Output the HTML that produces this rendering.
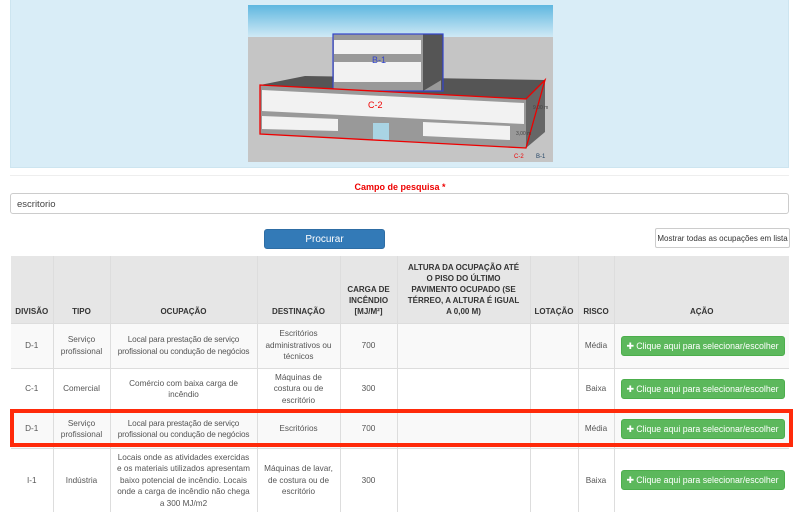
<!DOCTYPE html>
<html><head><meta charset="utf-8">
<style>
*{box-sizing:border-box;margin:0;padding:0}
body{width:800px;height:513px;overflow:hidden;background:#fff;font-family:"Liberation Sans",Arial,sans-serif;color:#333;position:relative}
.panel{position:absolute;left:10px;top:0;width:779px;height:168px;background:#d9edf7;border:1px solid #cde5f0;border-top:none}
.sep{position:absolute;left:10px;top:175px;width:779px;border-top:1px solid #eee}
.lbl{position:absolute;top:182px;left:0;width:800px;text-align:center;color:#e00;font-weight:bold;font-size:9px}
.inp{position:absolute;left:10px;top:193px;width:779px;height:21px;border:1px solid #ccc;border-radius:3px;font-size:9.5px;padding:5px 6px;color:#444}
.proc{position:absolute;left:264px;top:229px;width:121px;height:20px;background:#337ab7;border:1px solid #2e6da4;border-radius:3px;color:#fff;font-size:10px;display:flex;align-items:center;justify-content:center}
.most{position:absolute;left:655px;top:228px;width:135px;height:20px;background:#fff;border:1px solid #ccc;border-radius:2px;font-size:8px;display:flex;align-items:center;justify-content:center;color:#333}
table{position:absolute;left:11px;top:256px;width:778px;border-collapse:collapse;font-size:8.2px;color:#555;table-layout:fixed}
th{background:#e6e6e6;font-weight:bold;color:#333;font-size:8px;vertical-align:bottom;padding:3px 6px 6px;border-left:1px solid #ddd;line-height:11px;text-align:center}
td{border-left:1px solid #ddd;border-top:1px solid #ddd;text-align:center;vertical-align:middle;line-height:11.5px;padding:2px 6px;background:#f9f9f9}
td.o{padding:2px 1px;letter-spacing:-0.15px}
tr.w td{background:#fff}
.g{display:inline-block;background:#5cb85c;border:1px solid #4cae4c;border-radius:3px;color:#fff;font-size:8.8px;width:164px;height:20px;line-height:18px;text-align:center;white-space:nowrap}
.box{position:absolute;left:10px;top:409px;width:783px;height:38px;border:4px solid #ff2a0a}
</style></head><body>
<div class="panel"></div>
<svg style="position:absolute;left:248px;top:5px" width="305" height="157" viewBox="0 0 305 157">
<defs><linearGradient id="sky" x1="0" y1="0" x2="0" y2="1"><stop offset="0" stop-color="#5fb7e0"/><stop offset="1" stop-color="#cfe9f5"/></linearGradient></defs>
<rect width="305" height="157" fill="#c5c5c5"/>
<rect width="305" height="32" fill="url(#sky)"/>
<polygon points="12,80 57,71 297,75 278,94" fill="#555"/>
<rect x="85" y="29" width="108" height="57" fill="#999"/>
<rect x="86" y="35" width="87" height="14" fill="#f2f2f2"/>
<rect x="86" y="57" width="87" height="20" fill="#f2f2f2"/>
<polygon points="175,29 195,29 195,74 175,86" fill="#555"/>
<rect x="85" y="29" width="110" height="57" fill="none" stroke="#3344cc" stroke-width="1.2"/>
<text x="124" y="58" fill="#3344cc" font-size="9" font-family="Liberation Sans">B-1</text>
<polygon points="12,80 278,94 278,143 12,129" fill="#999"/>
<polygon points="14,85 276,98 276,119 14,106" fill="#f2f2f2"/>
<polygon points="14,111 90,114 90,126 14,124" fill="#f2f2f2"/>
<polygon points="175,117 262,121 262,135 175,131" fill="#f2f2f2"/>
<rect x="125" y="118" width="16" height="17" fill="#a9d4e4"/>
<polygon points="278,94 297,75 297,127 278,143" fill="#666"/>
<polygon points="12,80 278,94 297,75 278,143 12,129" fill="none" stroke="#e00" stroke-width="1.3"/>
<text x="120" y="103" fill="#e00" font-size="9" font-family="Liberation Sans">C-2</text>
<text x="285" y="104" fill="#444" font-size="5" font-family="Liberation Sans">9,00 m</text>
<text x="268" y="130" fill="#444" font-size="5" font-family="Liberation Sans">3,00 m</text>
<text x="266" y="153" fill="#e00" font-size="6" font-family="Liberation Sans">C-2</text>
<text x="288" y="153" fill="#246" font-size="6" font-family="Liberation Sans">B-1</text>
</svg>
<div class="sep"></div>
<div class="lbl">Campo de pesquisa *</div>
<div class="inp">escritorio</div>
<div class="proc">Procurar</div>
<div class="most">Mostrar todas as ocupações em lista</div>
<table>
<colgroup><col style="width:42px"><col style="width:57px"><col style="width:147px"><col style="width:83px"><col style="width:57px"><col style="width:133px"><col style="width:48px"><col style="width:36px"><col></colgroup>
<tr style="height:67px"><th style="border-left:none;padding:3px 2px 6px">DIVISÃO</th><th>TIPO</th><th>OCUPAÇÃO</th><th>DESTINAÇÃO</th><th style="padding:3px 2px 6px">CARGA DE INCÊNDIO [MJ/M²]</th><th style="padding:3px 10px 6px">ALTURA DA OCUPAÇÃO ATÉ O PISO DO ÚLTIMO PAVIMENTO OCUPADO (SE TÉRREO, A ALTURA É IGUAL A 0,00 M)</th><th style="padding:3px 2px 6px">LOTAÇÃO</th><th style="padding:3px 2px 6px">RISCO</th><th>AÇÃO</th></tr>
<tr style="height:45px"><td style="border-left:none">D-1</td><td style="padding:2px">Serviço profissional</td><td class="o">Local para prestação de serviço profissional ou condução de negócios</td><td style="padding:2px 8px">Escritórios administrativos ou técnicos</td><td>700</td><td></td><td></td><td style="padding:2px">Média</td><td><span class="g">✚ Clique aqui para selecionar/escolher</span></td></tr>
<tr class="w" style="height:42px"><td style="border-left:none">C-1</td><td style="padding:2px">Comercial</td><td style="padding:2px 14px">Comércio com baixa carga de incêndio</td><td style="padding:2px 12px">Máquinas de costura ou de escritório</td><td>300</td><td></td><td></td><td style="padding:2px">Baixa</td><td><span class="g">✚ Clique aqui para selecionar/escolher</span></td></tr>
<tr style="height:38px"><td style="border-left:none">D-1</td><td style="padding:2px">Serviço profissional</td><td class="o">Local para prestação de serviço profissional ou condução de negócios</td><td>Escritórios</td><td>700</td><td></td><td></td><td style="padding:2px">Média</td><td><span class="g">✚ Clique aqui para selecionar/escolher</span></td></tr>
<tr class="w" style="height:64px"><td style="border-left:none">I-1</td><td style="padding:2px">Indústria</td><td style="padding:2px 5px">Locais onde as atividades exercidas e os materiais utilizados apresentam baixo potencial de incêndio. Locais onde a carga de incêndio não chega a 300 MJ/m2</td><td style="padding:2px 6px">Máquinas de lavar, de costura ou de escritório</td><td>300</td><td></td><td></td><td style="padding:2px">Baixa</td><td><span class="g">✚ Clique aqui para selecionar/escolher</span></td></tr>
</table>
<div class="box"></div>
</body></html>
